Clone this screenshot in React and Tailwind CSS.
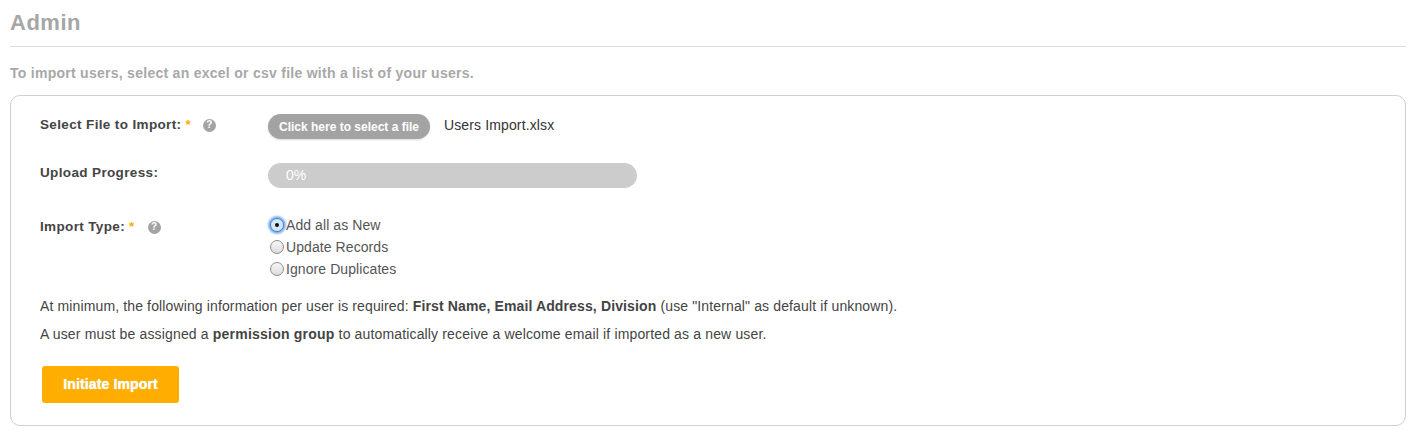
import React from 'react'

function Help() {
  return (
    <span className="flex h-[13px] w-[13px] items-center justify-center rounded-full bg-[#a3a3a3] text-[10px] font-bold leading-none text-white">?</span>
  )
}

function Req() {
  return <span className="ml-[4px] text-[#ffae00]">*</span>
}

function Radio({ checked, label }) {
  return (
    <div className="flex h-[22px] items-center">
      {checked ? (
        <span className="flex h-[14px] w-[14px] items-center justify-center rounded-full border border-[#4a80c8] bg-[#d5e8fb] shadow-[0_0_2px_2px_#7db2ee]">
          <span className="h-[4px] w-[4px] rounded-full bg-[#111]" />
        </span>
      ) : (
        <span className="h-[14px] w-[14px] rounded-full border border-[#8e8e8e] bg-gradient-to-b from-[#f6f6f6] to-[#dcdcdc]" />
      )}
      <span className="ml-[2px] text-[14px] tracking-[0.08px] text-[#555]">{label}</span>
    </div>
  )
}

export default function App() {
  return (
    <div className="h-[434px] bg-white px-[7px] font-['Liberation_Sans',Arial,sans-serif] text-[14px] text-[#444]">
      <div className="ml-[3px] border-b border-[#dcdcdc] pt-[8px] pb-[9px]">
        <h1 className="text-[22px] font-bold leading-[29px] tracking-[0.5px] text-[#a6a6a6]">Admin</h1>
      </div>
      <p className="ml-[3px] mt-[18px] text-[14px] font-bold leading-[17px] tracking-[0.27px] text-[#a8a8a8]">To import users, select an excel or csv file with a list of your users.</p>
      <div className="ml-[3px] mt-[13px] h-[331px] rounded-[10px] border border-[#cfcfcf] pl-[29px] pt-[18px]">
        <div className="flex h-[25px] items-center">
          <div className="flex w-[228px] items-center pb-[3px] text-[13.5px] font-bold tracking-[0.36px]">
            Select File to Import:<Req />
            <span className="ml-[12px]"><Help /></span>
          </div>
          <button className="h-[25px] w-[162px] rounded-full bg-[#a3a3a3] text-[12px] font-bold text-white shadow-[0_1px_2px_rgba(0,0,0,0.15)]">Click here to select a file</button>
          <span className="ml-[14px] pb-[2px] tracking-[0.13px] text-[#333]">Users Import.xlsx</span>
        </div>
        <div className="mt-[24px] flex h-[25px] items-center">
          <div className="w-[228px] pb-[4px] text-[13.5px] font-bold tracking-[0.36px]">Upload Progress:</div>
          <div className="flex h-[25px] w-[369px] items-center rounded-full bg-[#cccccc] pl-[18px] text-[14px] text-white">0%</div>
        </div>
        <div className="mt-[26px] flex">
          <div className="flex h-[22px] w-[228px] items-center pt-[4px] text-[13.5px] font-bold tracking-[0.36px]">
            Import Type:<Req />
            <span className="ml-[13px]"><Help /></span>
          </div>
          <div className="pl-[2px]">
            <Radio checked label="Add all as New" />
            <Radio label="Update Records" />
            <Radio label="Ignore Duplicates" />
          </div>
        </div>
        <p className="mt-[17px] leading-[18px] tracking-[0.13px]">At minimum, the following information per user is required: <b>First Name, Email Address, Division</b> (use "Internal" as default if unknown).</p>
        <p className="mt-[10px] leading-[18px] tracking-[0.15px]">A user must be assigned a <b className="tracking-[0.22px]">permission group</b> to automatically receive a welcome email if imported as a new user.</p>
        <button className="ml-[2px] mt-[23px] h-[37px] w-[137px] rounded-[3px] bg-[#ffae00] text-[14px] font-bold tracking-[0.14px] text-white [text-shadow:0_0_1px_#fff]">Initiate Import</button>
      </div>
    </div>
  )
}
